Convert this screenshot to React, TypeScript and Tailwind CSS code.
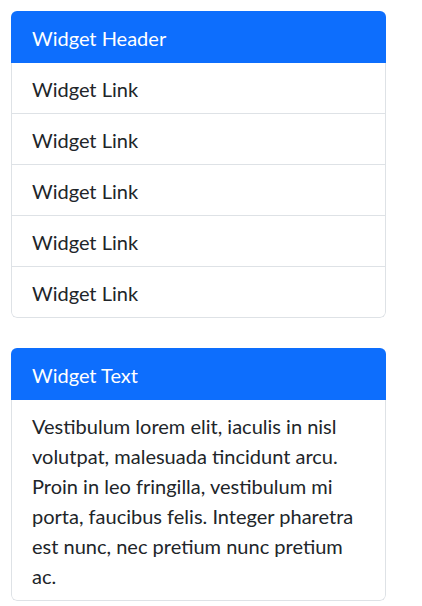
const links = ['Widget Link', 'Widget Link', 'Widget Link', 'Widget Link', 'Widget Link'];

const lines = [
  'Vestibulum lorem elit, iaculis in nisl',
  'volutpat, malesuada tincidunt arcu.',
  'Proin in leo fringilla, vestibulum mi',
  'porta, faucibus felis. Integer pharetra',
  'est nunc, nec pretium nunc pretium',
  'ac.',
];

function WidgetHeader({ title }: { title: string }) {
  return <div className="bg-[#0d6efd] px-[21px] pb-[10px] pt-[12px] text-white">{title}</div>;
}

export default function App() {
  return (
    <div
      className="min-h-screen bg-white p-[11px] text-[20px] leading-[30px] text-[#212529]"
      style={{ fontFamily: 'Lato, "Open Sans", sans-serif' }}
    >
      <div className="flex w-[375px] flex-col gap-[30px]">
        {/* Links widget */}
        <div className="overflow-hidden rounded-[6px]">
          <WidgetHeader title="Widget Header" />
          <ul className="rounded-b-[6px] border-x border-b border-[#dee2e6]">
            {links.map((label, i) => (
              <li
                key={i}
                className={`px-[20px] pb-[9px] pt-[11px] ${i > 0 ? 'border-t border-[#dee2e6]' : ''}`}
              >
                {label}
              </li>
            ))}
          </ul>
        </div>

        {/* Text widget */}
        <div className="overflow-hidden rounded-[6px]">
          <WidgetHeader title="Widget Text" />
          <p className="rounded-b-[6px] border-x border-b border-[#dee2e6] px-[20px] pb-[9px] pt-[11px]">
            {lines.map((l, i) => (
              <span key={i} className="block whitespace-nowrap">
                {l}
              </span>
            ))}
          </p>
        </div>
      </div>
    </div>
  );
}
